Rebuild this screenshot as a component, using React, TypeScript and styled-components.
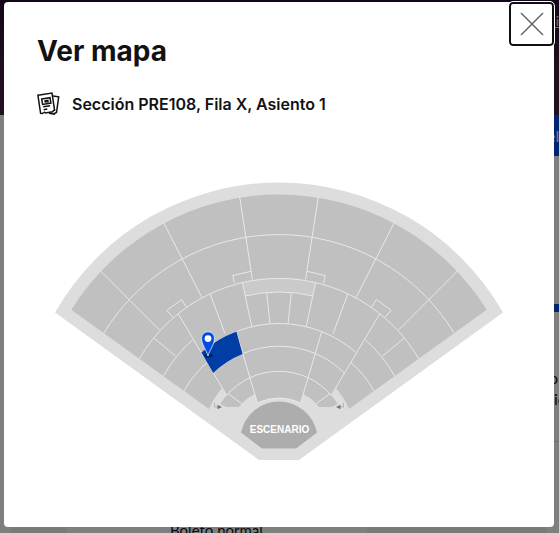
import React from 'react';
import styled, { createGlobalStyle } from 'styled-components';

const GlobalStyle = createGlobalStyle`
  *, *::before, *::after { box-sizing: border-box; }
  body {
    margin: 0;
    background: #fff;
    color: #121212;
    font-family: Lato, "Open Sans", sans-serif;
    overflow: hidden;
  }
`;

const Page = styled.div`
  display: flex;
  flex-direction: column;
  height: 100vh;
  overflow: hidden;
`;

const Banner = styled.header`
  display: flex;
  justify-content: flex-end;
  flex: none;
  height: 115px;
  padding-top: 12px;
  background: linear-gradient(180deg, #240b2c, #40203c 60%, #44243c);
`;

const BannerLink = styled.a`
  color: #ddd;
  font-size: 14px;
  line-height: 18px;
`;

const Columns = styled.div`
  display: grid;
  grid-template-columns: minmax(0, 1fr) 12px;
  flex: 1;
  min-height: 0;
`;

const Main = styled.main`
  display: flex;
  flex-direction: column;
  justify-content: flex-end;
  margin-left: 11px;
  padding: 0 180px 0 56px;
  background: #f5f5f5;
`;

const Ticket = styled.p`
  margin: 0;
  height: 12px;
  padding-left: 103px;
  background: #fff;
  font-size: 15px;
  line-height: 18px;
`;

const Aside = styled.aside`
  overflow: hidden;
  white-space: nowrap;
`;

const BuyButton = styled.button`
  display: block;
  width: 100%;
  height: 41px;
  padding: 0;
  border: 0;
  background: #024ddf;
  color: #fff;
  font: 16px/40px Lato, sans-serif;
  text-align: right;
`;

const AsideCard = styled.div`
  height: 138px;
  margin-top: 148px;
  border-top: 8px solid #024ddf;
  border-bottom: 1px solid #ddd;
  padding-top: 55px;
  font-size: 16px;
  line-height: 21px;
`;

const AsideText = styled.div<{ $indent: number }>`
  padding-left: ${(p) => p.$indent}px;
`;

const Overlay = styled.div`
  position: fixed;
  inset: 0;
  display: flex;
  padding: 2px 5px 6px 4px;
  background: rgba(0, 0, 0, 0.5);
`;

const Dialog = styled.section`
  position: relative;
  flex: 1;
  min-width: 0;
  padding: 31px 33px;
  border-radius: 4px;
  background: #fff;
`;

const CloseButton = styled.button`
  position: absolute;
  top: 0;
  right: 0;
  display: grid;
  place-items: center;
  width: 45px;
  height: 44px;
  padding: 0;
  border: 2px solid #101010;
  border-radius: 4px;
  outline: 1px solid #fff;
  background: #fff;
`;

const Title = styled.h1`
  margin: 0;
  font: 700 28px/36px Inter, sans-serif;
`;

const Seat = styled.p`
  display: flex;
  align-items: center;
  gap: 12px;
  margin: 23px 0 0;
  font: 600 16px/24px Inter, sans-serif;
`;

const MapFrame = styled.figure`
  margin: 66px 18px 0;
`;

const VenueSvg = styled.svg`
  display: block;
  width: 100%;
  height: auto;
`;

const TicketsIcon = () => (
  <svg width="23" height="24" viewBox="0 0 23 24" fill="none" stroke="#121212" strokeWidth="1.5" aria-hidden="true">
    <path d="M.9 3.2 15 1l2.6 17.3q-1.5-.1-1.9 1.5l-7.4 1.1q-1-1.3-2.7.5l-2-.1z" />
    <path d="M16 4l5.7.8-2.2 15.8q-1.5 0-2 1.5l-5.5-.8" />
    <path d="M4.7 7l8.3-1.3.9 5.4-8.3 1.3zM6.2 14.8l6.9-1.1M6.7 17.7l3.6-.6M7.3 8.9l3.5-.5.2 1.2-3.4.5" />
  </svg>
);

const CloseIcon = () => (
  <svg width="24" height="24" viewBox="0 0 24 24" fill="none" stroke="#666" strokeWidth="1.5" aria-hidden="true">
    <path d="M1 1l22 22M23 1L1 23" />
  </svg>
);

const HalfLines = () => (
  <>
    <path d="M239.6 196.5L252.4 279.5M163.6 222.5L201.8 297.3M100.5 271L159.4 330" />
    <path d="M234.3 283.2L232.8 275.6L251 271.3M173.3 317.8L166.8 310.3L181.8 299.5L186.2 307" />
    <path d="M210.3 294.2L225 333.8M242.4 282.6L251.7 326.4M266.7 292.6L269.9 323.6" />
    <path d="M178.3 314L226.7 395.3M153.7 338L175.4 355.9M236.4 332L257.4 403" />
    <path d="M163.5 376A132 132 0 0 1 192.5 340M184 391A106 106 0 0 1 207 362.5" />
    <path d="M228 393.5L241.5 403.5" />
  </>
);

const HalfSeats = () => (
  <path d="M279.5 194.4A245.6 245.6 0 0 0 71.3 309.7L209 409A77 77 0 0 1 221.8 388.5L226.7 395.3A69 69 0 0 0 220.3 404L226 407H239Q245 399 254.5 394.3L257.4 403A49 49 0 0 1 279.5 398Z" />
);

const HalfArrow = () => (
  <>
    <path d="M214.5 403V407H218" fill="none" stroke="#aaa" strokeWidth=".8" />
    <path d="M217.5 404.8L222 407L217.5 409.2Z" fill="#777" />
  </>
);

const mirror = 'matrix(-1 0 0 1 558 0)';

const VenueMap = () => (
  <VenueSvg viewBox="55 182 448 279" role="img" aria-label="Mapa del recinto">
    <path d="M55 312.5A258 258 0 0 1 503 312.5L299 460H259Z" fill="#ddd" />
    <g fill="#c0c0c0">
      <HalfSeats />
      <g transform={mirror}><HalfSeats /></g>
    </g>
    <path d="M242.4 282.6A162 162 0 0 1 315.6 282.6L313.2 296A148 148 0 0 0 244.8 296Z" fill="#cacaca" />
    <g fill="none" stroke="#e8e8e8" strokeWidth="1">
      <path d="M103.7 333.3A205 205 0 0 1 454.3 333.3" />
      <path d="M139.4 358.6A161.6 161.6 0 0 1 418.6 358.6" />
      <path d="M245 296A148 148 0 0 1 313 296" />
      <path d="M202 352.5A116.7 116.7 0 0 1 356 352.5" />
      <path d="M213 373.5A93.5 93.5 0 0 1 345 373.5" />
      <path d="M226.7 395.3A69 69 0 0 1 331.3 395.3" />
      <path d="M257.4 403A49 49 0 0 1 300.6 403" />
      <HalfLines />
      <g transform={mirror}><HalfLines /></g>
    </g>
    <HalfArrow />
    <g transform={mirror}><HalfArrow /></g>
    <path d="M241 432.5A38.8 38.8 0 0 1 317 432.5L296 448.5H262Z" fill="#adadad" />
    <text x="279.5" y="432.5" textAnchor="middle" fill="#fff" fontFamily="Liberation Sans, Arial, sans-serif" fontWeight="700" fontSize="10">ESCENARIO</text>
    <path d="M201.4 352.5A117 117 0 0 1 236.4 331.6L242.6 354A93.5 93.5 0 0 0 213.2 373Z" fill="#003da5" />
    <ellipse cx="208.5" cy="355.5" rx="4" ry="2" fill="#00225f" />
    <path d="M208 356C206.5 350 201.5 344.5 201.5 338.2A6.5 6.5 0 0 1 214.5 338.2C214.5 344.5 209.5 350 208 356Z" fill="#024ddf" stroke="#fff" strokeWidth=".7" />
    <circle cx="208" cy="338.6" r="3.4" fill="#fff" />
  </VenueSvg>
);

export default function App() {
  return (
    <>
      <GlobalStyle />
      <Page>
        <Banner>
          <BannerLink href="#evento">Si</BannerLink>
        </Banner>
        <Columns>
          <Main>
            <Ticket>Boleto normal</Ticket>
          </Main>
          <Aside>
            <BuyButton type="button">el</BuyButton>
            <AsideCard>
              <AsideText $indent={2}>o</AsideText>
              <AsideText $indent={7}>ic</AsideText>
            </AsideCard>
          </Aside>
        </Columns>
      </Page>
      <Overlay>
        <Dialog role="dialog" aria-modal="true" aria-labelledby="map-title">
          <Title id="map-title">Ver mapa</Title>
          <Seat>
            <TicketsIcon />
            Sección PRE108, Fila X, Asiento 1
          </Seat>
          <MapFrame>
            <VenueMap />
          </MapFrame>
          <CloseButton type="button" aria-label="Cerrar">
            <CloseIcon />
          </CloseButton>
        </Dialog>
      </Overlay>
    </>
  );
}
